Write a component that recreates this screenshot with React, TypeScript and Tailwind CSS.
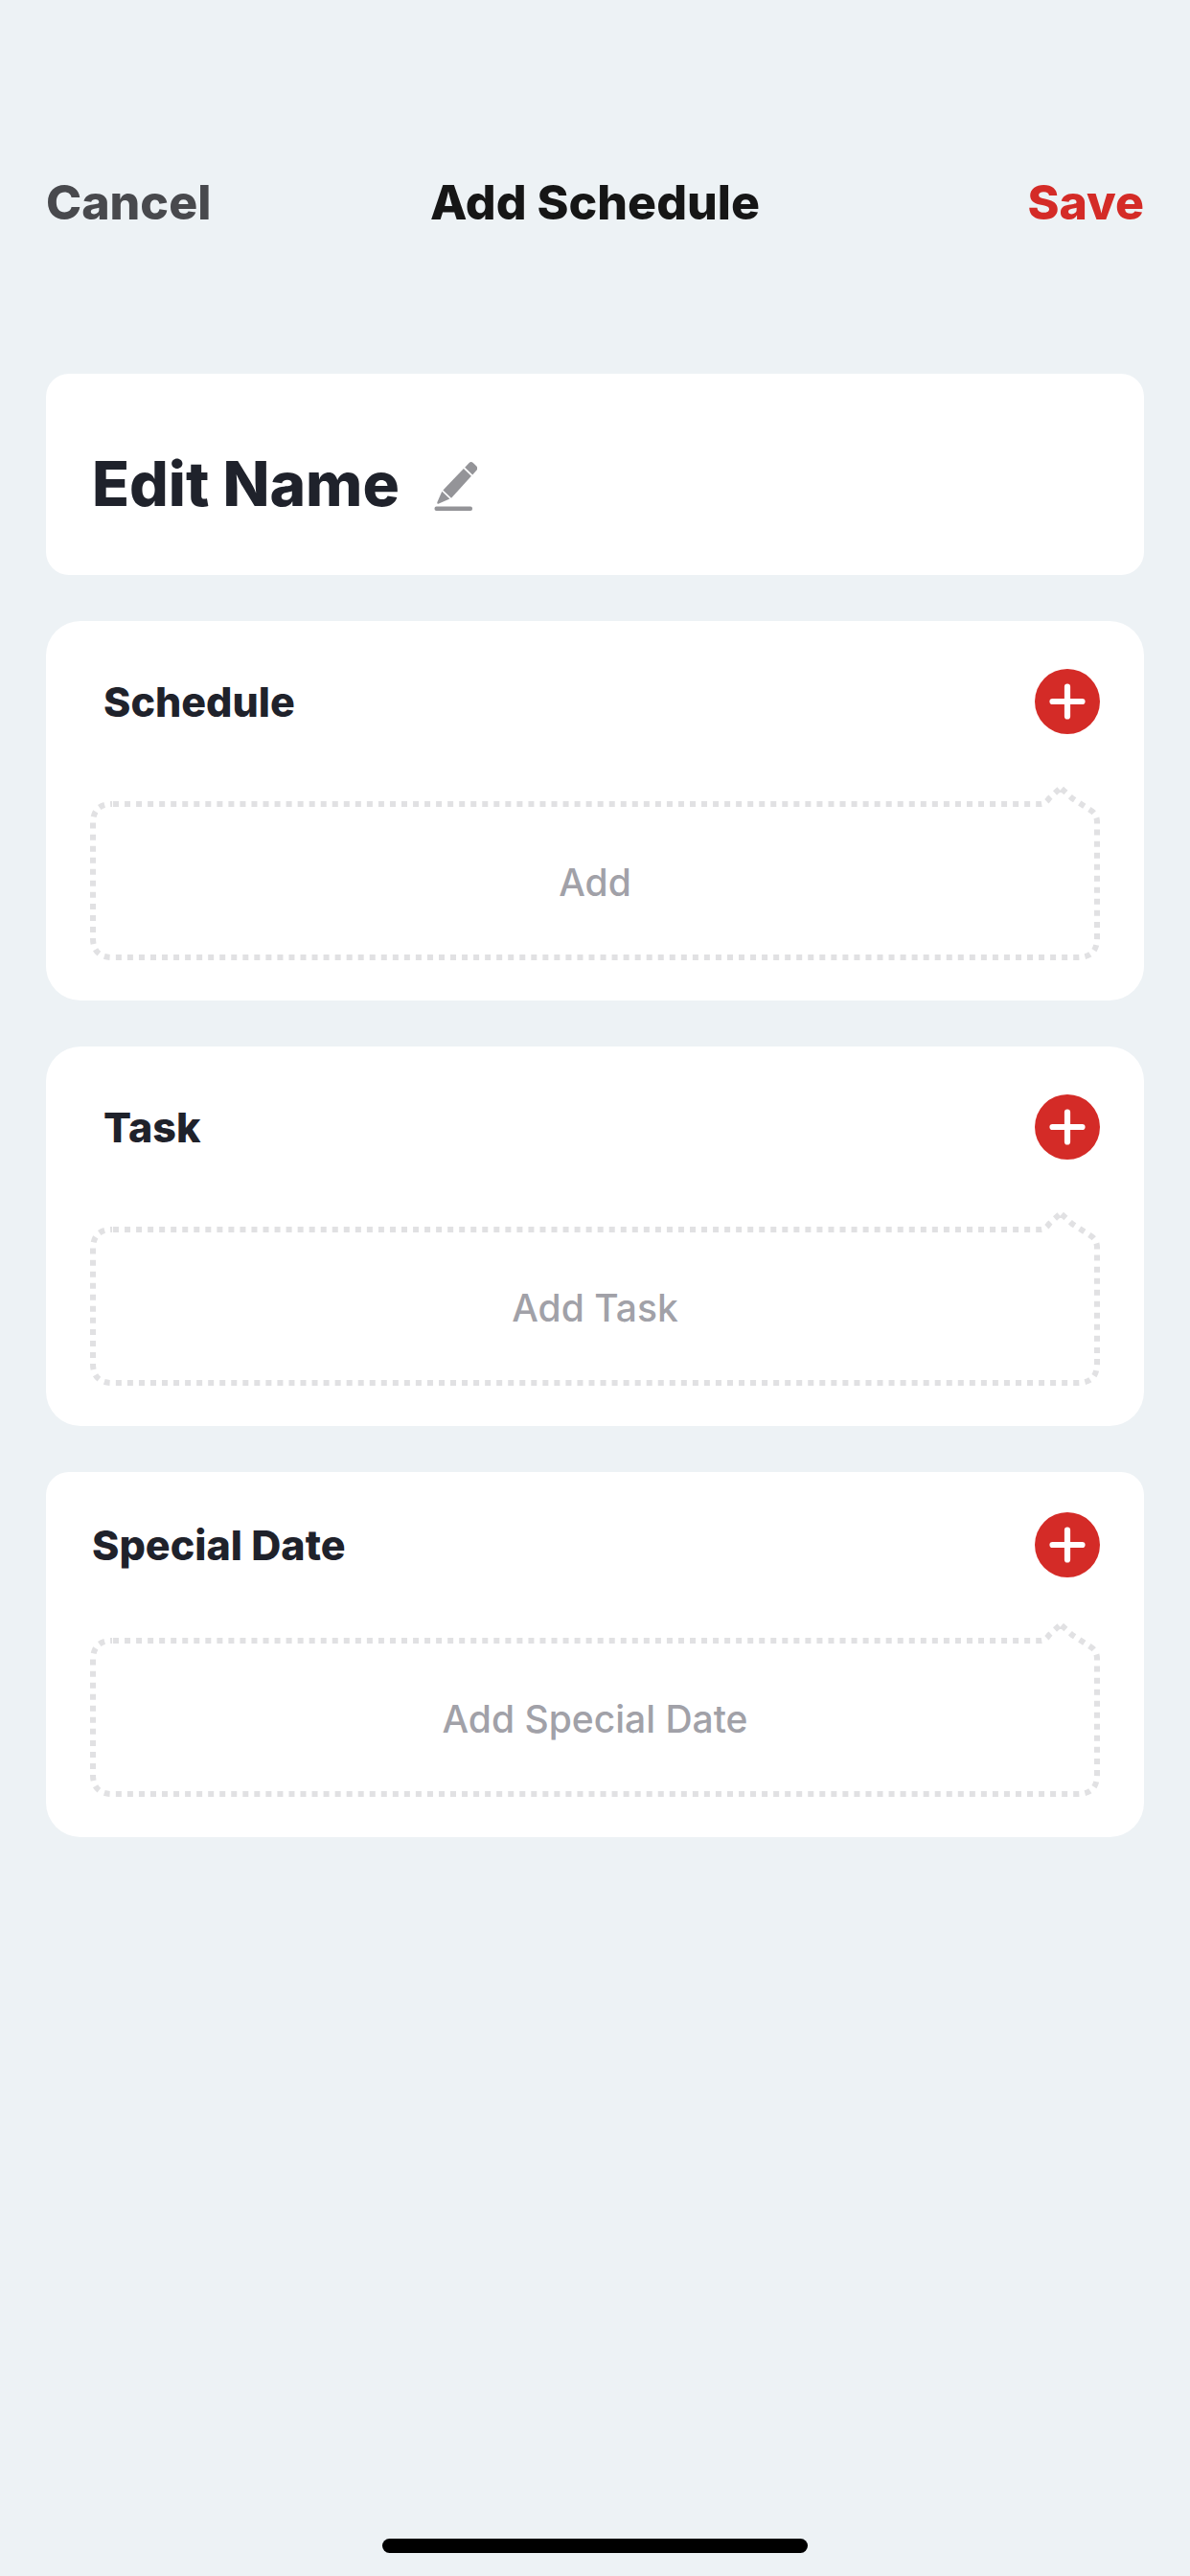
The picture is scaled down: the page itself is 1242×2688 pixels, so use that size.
import { useLayoutEffect, useRef, useState } from "react";
import clsx from "clsx";

type Section = {
  title: string;
  placeholder: string;
  compact?: boolean;
};

const SECTIONS: Section[] = [
  { title: "Schedule", placeholder: "Add" },
  { title: "Task", placeholder: "Add Task" },
  { title: "Special Date", placeholder: "Add Special Date", compact: true },
];

// Speech bubble outline. The pointer hangs off the top right corner, below the plus button.
const bubblePath = (w: number, h: number) => {
  const r = w - 3;
  const b = h - 3;
  return [
    `M24 3H${w - 62}Q${w - 57} 3 ${w - 53} -3L${w - 42} -13`,
    `M${w - 40} -13L${w - 29} -3L${w - 9} 10Q${r} 14 ${r} 22`,
    `V${b - 20}Q${r} ${b} ${r - 20} ${b}H23Q3 ${b} 3 ${b - 20}V23Q3 3 23 3`,
  ].join("");
};

const PlusIcon = () => (
  <svg viewBox="0 0 68 68" className="size-[68px]" aria-hidden="true">
    <circle cx="34" cy="34" r="34" fill="#d42b27" />
    <path d="M34 18.5V49.5M18.5 34H49.5" stroke="#fff" strokeWidth="6.2" strokeLinecap="round" />
  </svg>
);

const PencilIcon = () => (
  <svg viewBox="23 23 45 51" className="h-[51px] w-[45px]" fill="#949498" aria-hidden="true">
    <path d="M55.2 28.8L59.6 24Q61.6 22.2 63.8 24L67.4 27.6Q69 29.4 67.6 31.6L63.2 36.6Z" />
    <path d="M53.9 30L61.9 37.8L41 60.8L32.4 52.4Z" />
    <path d="M31.3 53.7L39.4 61.6L28 66.5Q25.6 67.2 26.4 65Z" />
    <rect x="23.5" y="69.5" width="39.5" height="4.5" rx="2" />
  </svg>
);

const DottedBox = ({ label }: { label: string }) => {
  const ref = useRef<HTMLButtonElement>(null);
  const [size, setSize] = useState({ w: 0, h: 0 });

  useLayoutEffect(() => {
    const el = ref.current;
    if (!el) return;
    const measure = () => setSize({ w: el.offsetWidth, h: el.offsetHeight });
    measure();
    const observer = new ResizeObserver(measure);
    observer.observe(el);
    return () => observer.disconnect();
  }, []);

  return (
    <button
      ref={ref}
      type="button"
      className="relative flex w-full items-center justify-center pt-[60px] pb-[56px] text-[39px] leading-[50px] font-medium text-[#a1a1a8]"
    >
      {label}
      {size.w > 0 && (
        <svg className="absolute inset-0 size-full overflow-visible" aria-hidden="true">
          <path
            d={bubblePath(size.w, size.h)}
            fill="none"
            stroke="#e1e1e3"
            strokeWidth="6"
            strokeDasharray="6 6.04"
          />
        </svg>
      )}
    </button>
  );
};

const SectionCard = ({ title, placeholder, compact }: Section) => (
  <section
    className={clsx(
      "rounded-b-[36px] bg-white px-[46px] pb-[42px]",
      compact ? "rounded-t-[24px] pt-[42px]" : "rounded-t-[36px] pt-[50px]"
    )}
  >
    <div
      className={clsx(
        "flex items-center justify-between",
        compact ? "mb-[63px] pl-[2px]" : "mb-[70px] pl-[14px]"
      )}
    >
      <h2 className="text-[43px] leading-[50px] font-extrabold text-[#1f222b]">{title}</h2>
      <button type="button" aria-label={`Add to ${title}`} className="rounded-full">
        <PlusIcon />
      </button>
    </div>
    <DottedBox label={placeholder} />
  </section>
);

const App = () => {
  return (
    <div className="flex min-h-screen flex-col bg-[#edf2f5] font-['Inter','Liberation_Sans',sans-serif]">
      <header className="grid grid-cols-[1fr_auto_1fr] items-center px-12 pt-[181px] pb-[149px] text-[50px] leading-[60px] font-extrabold">
        <button type="button" className="justify-self-start text-[#48494d]">
          Cancel
        </button>
        <h1 className="text-[#161616]">Add Schedule</h1>
        <button type="button" className="justify-self-end text-[#d42b27]">
          Save
        </button>
      </header>
      <main className="flex flex-1 flex-col gap-12 px-12">
        <section className="flex items-center gap-9 rounded-[24px] bg-white px-12 pt-[75px] pb-[55px]">
          <h2 className="text-[64px] leading-[80px] font-extrabold text-[#1f222b]">Edit Name</h2>
          <button type="button" aria-label="Edit name" className="pt-1">
            <PencilIcon />
          </button>
        </section>
        {SECTIONS.map((section) => (
          <SectionCard key={section.title} {...section} />
        ))}
      </main>
      <div className="mx-auto mb-6 h-[15px] w-[444px] rounded-full bg-black" />
    </div>
  );
};

export default App;
